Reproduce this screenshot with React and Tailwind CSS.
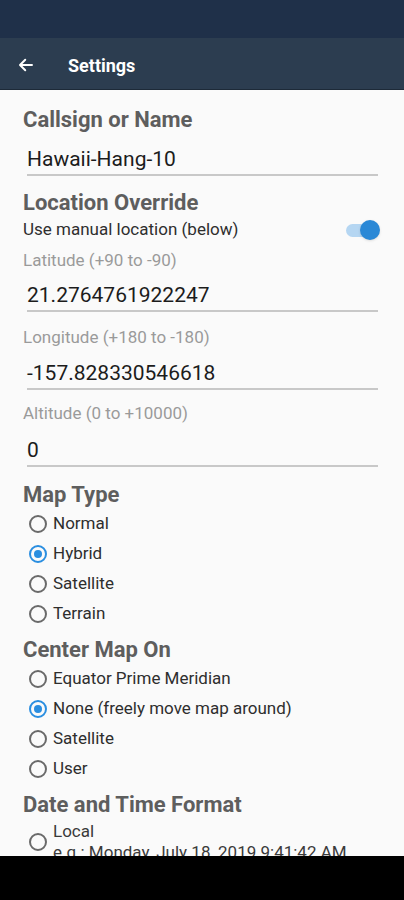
import { useState } from "react";

function Heading({ children, className = "" }) {
  return (
    <div className={`text-[22px] leading-[28px] font-bold text-[#5e5e5e] ${className}`}>
      {children}
    </div>
  );
}

function Field({ value, className = "" }) {
  return (
    <div className={`ml-1 mr-[2px] h-[32px] border-b-2 border-[#c8c8c8] text-[21px] leading-[30px] text-[#1c1c1c] ${className}`}>
      {value}
    </div>
  );
}

function Hint({ children, className = "" }) {
  return <div className={`text-[17px] leading-[22px] text-[#9a9a9a] ${className}`}>{children}</div>;
}

function Radio({ checked }) {
  return (
    <span
      className={`flex items-center justify-center w-[18px] h-[18px] rounded-full border-2 shrink-0 ${
        checked ? "border-[#2a8ee0]" : "border-[#6a6a6a]"
      }`}
    >
      {checked && <span className="w-[8px] h-[8px] rounded-full bg-[#2a8ee0]" />}
    </span>
  );
}

function RadioGroup({ options, selected }) {
  return (
    <div className="flex flex-col">
      {options.map((o) => (
        <div key={o} className="flex items-center h-[30px] pl-[6px] gap-[6px]">
          <Radio checked={o === selected} />
          <span className="text-[17px] text-[#2e2e2e]">{o}</span>
        </div>
      ))}
    </div>
  );
}

export default function App() {
  const [manual] = useState(true);

  return (
    <div className="w-[404px] h-[900px] flex flex-col bg-black" style={{ fontFamily: "Roboto, 'Noto Sans', sans-serif" }}>
      <div className="h-[38px] bg-[#1f3049]" />
      <div className="h-[52px] bg-[#2c3d50] flex items-center pt-[3px] border-b border-[#1d2a38]">
        <svg className="ml-[17px] w-[18px] h-[18px]" viewBox="0 0 24 24" fill="none" stroke="white" strokeWidth="2.6" strokeLinecap="round" strokeLinejoin="round">
          <path d="M20 12H5M11 5l-7 7 7 7" />
        </svg>
        <span className="ml-[33px] text-[18px] font-bold text-white">Settings</span>
      </div>

      <div className="h-[766px] overflow-hidden bg-[#fafafa] pl-[23px] pr-[24px] pt-[16px]">
        <Heading>Callsign or Name</Heading>
        <Field value="Hawaii-Hang-10" className="mt-[10px]" />

        <Heading className="mt-[13px]">Location Override</Heading>
        <div className="flex items-center justify-between h-[24px] mt-[1px]">
          <span className="text-[17px] text-[#2e2e2e]">Use manual location (below)</span>
          <div className="relative w-[34px] h-[20px] flex items-center">
            <div className="w-[30px] h-[13px] rounded-full bg-[#b5d6f2]" />
            {manual && <div className="absolute right-0 w-[20px] h-[20px] rounded-full bg-[#2a88d6] shadow" />}
          </div>
        </div>

        <Hint className="mt-[7px]">Latitude (+90 to -90)</Hint>
        <Field value="21.2764761922247" className="mt-[9px]" />

        <Hint className="mt-[14px]">Longitude (+180 to -180)</Hint>
        <Field value="-157.828330546618" className="mt-[10px]" />

        <Hint className="mt-[12px]">Altitude (0 to +10000)</Hint>
        <Field value="0" className="mt-[11px]" />

        <Heading className="mt-[14px]">Map Type</Heading>
        <RadioGroup options={["Normal", "Hybrid", "Satellite", "Terrain"]} selected="Hybrid" />

        <Heading className="mt-[7px]">Center Map On</Heading>
        <RadioGroup
          options={["Equator Prime Meridian", "None (freely move map around)", "Satellite", "User"]}
          selected="None (freely move map around)"
        />

        <Heading className="mt-[7px]">Date and Time Format</Heading>
        <div className="flex items-center pl-[6px] gap-[6px] mt-[2px]">
          <Radio checked={false} />
          <div className="flex flex-col">
            <span className="text-[17px] leading-[21px] text-[#3a3a3a]">Local</span>
            <span className="text-[17px] leading-[21px] text-[#3a3a3a] whitespace-nowrap">e.g.: Monday, July 18, 2019 9:41:42 AM</span>
          </div>
        </div>
      </div>

      <div className="flex-1 bg-black" />
    </div>
  );
}
